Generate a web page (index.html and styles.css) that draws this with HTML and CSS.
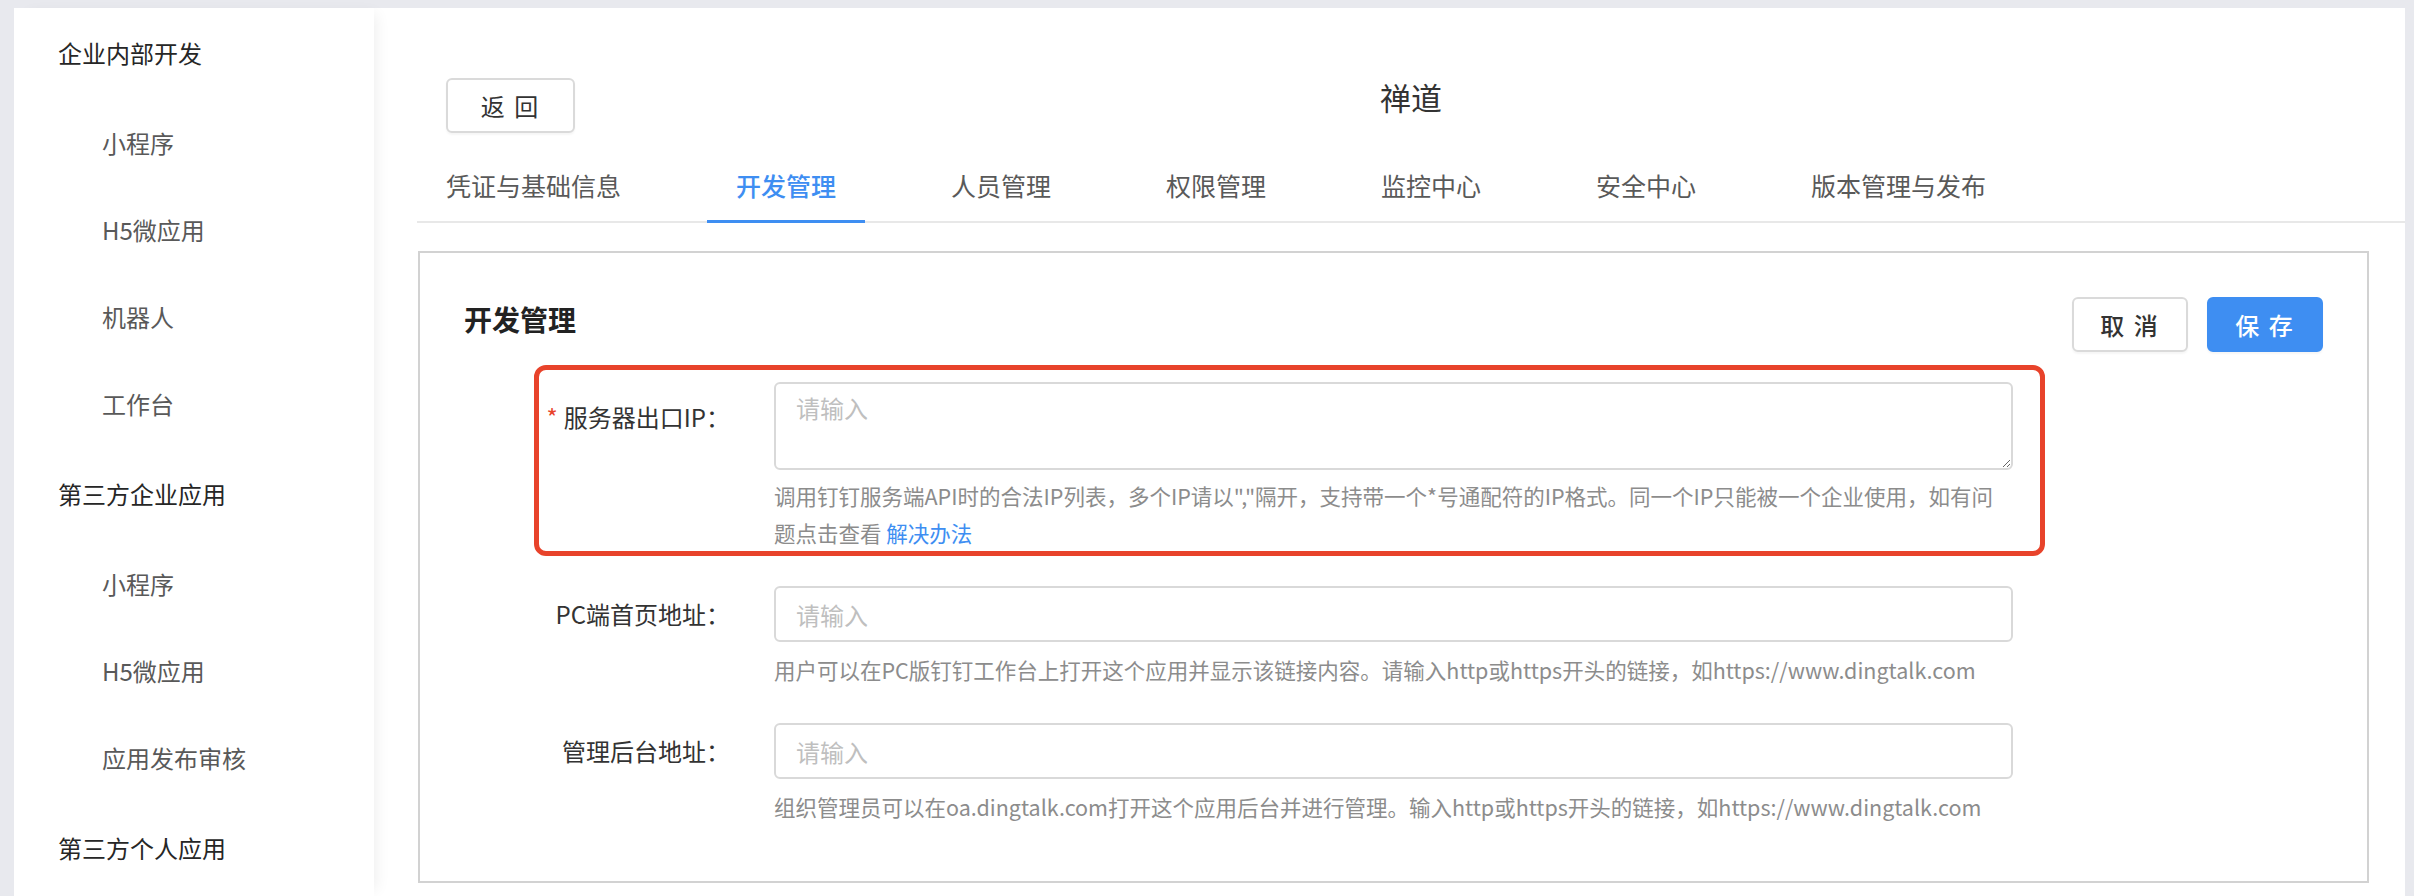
FILE: index.html
```html
<!DOCTYPE html>
<html>
<head>
    <meta charset="UTF-8">
    <title>禅道 - 开发管理</title>

    <link rel="stylesheet" href="styles.css">
</head>
<body>

    <div class="pagina">

        <aside class="menu">
            <div class="menu-grupo">企业内部开发</div>
            <div class="menu-item">小程序</div>
            <div class="menu-item">H5微应用</div>
            <div class="menu-item">机器人</div>
            <div class="menu-item">工作台</div>
            <div class="menu-grupo">第三方企业应用</div>
            <div class="menu-item">小程序</div>
            <div class="menu-item">H5微应用</div>
            <div class="menu-item">应用发布审核</div>
            <div class="menu-grupo">第三方个人应用</div>
        </aside>

        <main class="conteudo">

            <header class="topo">
                <button class="botao botao-voltar">返 回</button>
                <h1 class="titulo">禅道</h1>
            </header>

            <nav class="abas">
                <span class="aba">凭证与基础信息</span>
                <span class="aba ativa">开发管理</span>
                <span class="aba">人员管理</span>
                <span class="aba">权限管理</span>
                <span class="aba">监控中心</span>
                <span class="aba">安全中心</span>
                <span class="aba">版本管理与发布</span>
            </nav>

            <section class="cartao">
                <div class="cartao-topo">
                    <h2>开发管理</h2>
                    <div class="acoes">
                        <button class="botao">取 消</button>
                        <button class="botao botao-primario">保 存</button>
                    </div>
                </div>

                <form class="formulario">
                    <div class="campo destaque">
                        <label><span class="obrigatorio">*</span>服务器出口IP：</label>
                        <textarea placeholder="请输入"></textarea>
                        <p class="dica">调用钉钉服务端API时的合法IP列表，多个IP请以","隔开，支持带一个*号通配符的IP格式。同一个IP只能被一个企业使用，如有问<br>题点击查看 <a href="#">解决办法</a></p>
                    </div>

                    <div class="campo">
                        <label>PC端首页地址：</label>
                        <input type="text" placeholder="请输入">
                        <p class="dica">用户可以在PC版钉钉工作台上打开这个应用并显示该链接内容。请输入http或https开头的链接，如https://www.dingtalk.com</p>
                    </div>

                    <div class="campo">
                        <label>管理后台地址：</label>
                        <input type="text" placeholder="请输入">
                        <p class="dica">组织管理员可以在oa.dingtalk.com打开这个应用后台并进行管理。输入http或https开头的链接，如https://www.dingtalk.com</p>
                    </div>
                </form>
            </section>

        </main>
    </div>

</body>
</html>
```

FILE: styles.css
```css
*, *:after, *:before {
    box-sizing: border-box;
    margin: 0;
    padding: 0;
}

html, body {
    height: 100%;
}

body {
    background: #e8e9ee;
    color: #333;
    font-family: "PingFang SC", "Noto Sans CJK SC", "Noto Sans", sans-serif;
    overflow: hidden;
}

.pagina {
    display: flex;
    height: 100%;
    padding-top: 8px;
}

/* menu lateral */
.menu {
    width: 360px;
    margin-left: 14px;
    padding: 1px 0 0 44px;
    background: #fff;
    position: relative;
    z-index: 1;
    box-shadow: 8px 0 14px -6px rgba(0,0,0,0.07);
}
    .menu-grupo,
    .menu-item {
        font-size: 24px;
        line-height: 87px;
        white-space: nowrap;
    }

    .menu-grupo {
        color: #262626;
    }
    .menu-grupo + .menu-item {
        margin-top: 3px;
    }
    .menu-item + .menu-grupo {
        margin-top: 3px;
    }

    .menu-item {
        color: #595959;
        padding-left: 44px;
    }

/* conteudo */
.conteudo {
    flex: 1;
    background: #fff;
    margin-right: 9px;
    padding-left: 43px;
}

.topo {
    display: grid;
    grid-template-columns: 1fr auto 1fr;
    align-items: center;
    padding: 70px 0 0 29px;
}
    .titulo {
        grid-column: 2;
        font-size: 31px;
        font-weight: normal;
        line-height: 1;
        color: #333;
        margin: 0 0 18px -29px;
    }

.botao {
    font-family: inherit;
    font-size: 24px;
    color: #333;
    background: #fff;
    border: 2px solid #dadada;
    border-radius: 6px;
    height: 55px;
    letter-spacing: 2px;
    box-shadow: 0 2px 2px rgba(0,0,0,0.04);
    cursor: pointer;
}

.botao-voltar {
    grid-column: 1;
    justify-self: start;
    width: 129px;
}

.botao-primario {
    background: #3e8ef2;
    border-color: #3e8ef2;
    color: #fff;
}

/* abas */
.abas {
    display: flex;
    gap: 57px;
    margin-top: 35px;
    border-bottom: 2px solid #e8e8e8;
}
    .aba {
        font-size: 25px;
        line-height: 34px;
        color: #595959;
        padding: 0 29px 18px;
        margin-bottom: -2px;
        border-bottom: 3px solid transparent;
        white-space: nowrap;
    }

    .aba.ativa {
        color: #3e8ef2;
        font-weight: 500;
        border-bottom-color: #3e8ef2;
    }

/* cartao */
.cartao {
    margin: 28px 36px 0 1px;
    border: 2px solid #d2d2d2;
    padding: 44px 44px 56px;
}

.cartao-topo {
    display: flex;
    justify-content: space-between;
    align-items: center;
}
    .cartao-topo h2 {
        font-size: 28px;
        font-weight: bold;
        color: #222;
        margin-bottom: 12px;
    }

    .acoes {
        display: flex;
        gap: 19px;
    }
    .acoes .botao {
        width: 116px;
        font-weight: 500;
    }

/* formulario */
.formulario {
    margin-top: 30px;
}

.campo {
    display: grid;
    grid-template-columns: 266px 1239px;
    column-gap: 44px;
    width: fit-content;
    position: relative;
}
    .campo + .campo {
        margin-top: 35px;
    }

    .campo label {
        grid-column: 1;
        text-align: right;
        font-size: 24px;
        line-height: 56px;
        color: #333;
        white-space: nowrap;
    }

    .campo textarea,
    .campo input {
        grid-column: 2;
        font-family: inherit;
        font-size: 24px;
        color: #333;
        border: 2px solid #d9d9d9;
        border-radius: 6px;
        padding: 0 20px;
        outline: none;
    }

    .campo input {
        height: 56px;
    }

    .campo textarea {
        height: 88px;
        padding-top: 7px;
        line-height: 34px;
    }

    .campo ::placeholder {
        color: #bfbfbf;
    }

    .dica {
        grid-column: 2;
        font-size: 21.5px;
        line-height: 37px;
        color: #8c8c8c;
        margin-top: 9px;
        white-space: nowrap;
    }
        .dica a {
            color: #3e8ef2;
            text-decoration: none;
        }

    .obrigatorio {
        color: #e8432b;
        margin-right: 6px;
    }

.destaque label {
    padding-top: 7px;
}
.destaque .dica {
    margin-top: 7px;
}

/* marcacao vermelha por cima do campo */
.destaque:before {
    content: '';
    position: absolute;
    top: -17px;
    bottom: -5px;
    left: 70px;
    right: -32px;
    border: 5px solid #e8432b;
    border-radius: 12px;
    pointer-events: none;
}
```
